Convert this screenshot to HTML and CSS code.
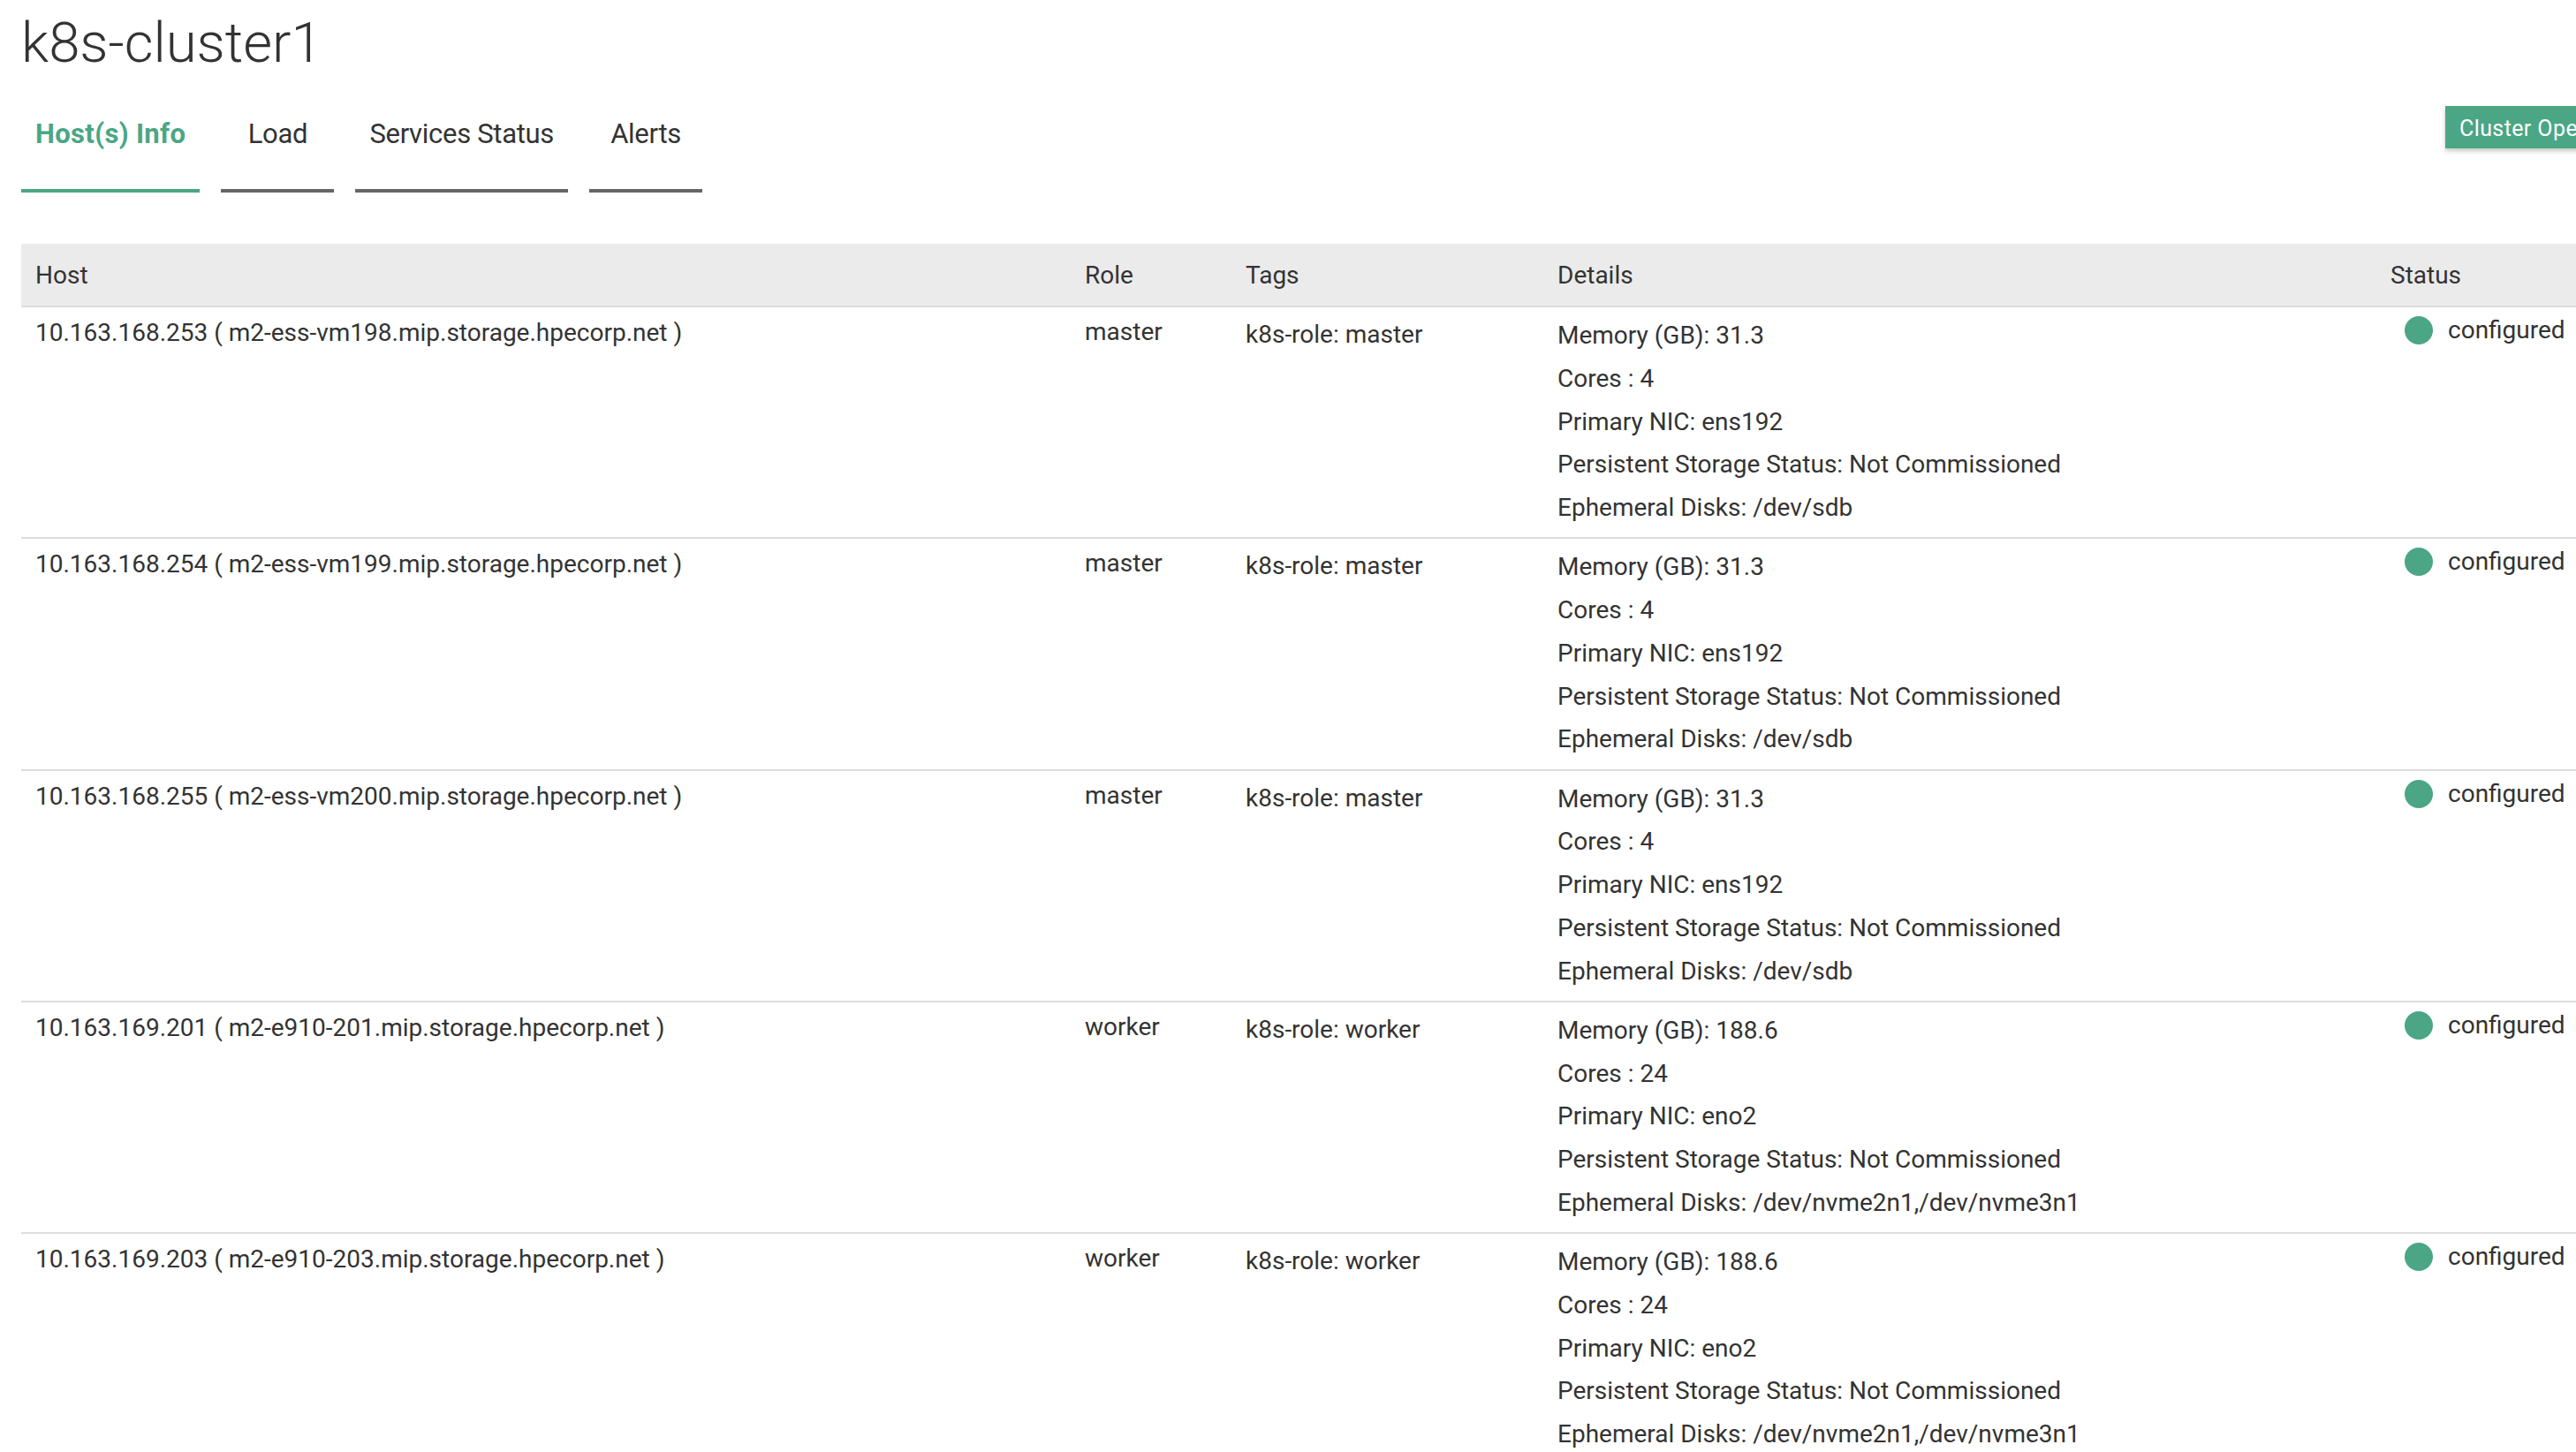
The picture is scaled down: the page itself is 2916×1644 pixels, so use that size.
FILE: index.html
```html
<!DOCTYPE html>
<html lang="en">
<head>
<meta charset="utf-8">
<title>k8s-cluster1</title>
<link rel="stylesheet" href="styles.css">
</head>
<body>
<div class="page">
  <h1 class="title">k8s-cluster1</h1>
  <div class="tabbar">
    <nav class="tabs">
      <a class="tab active">Host(s) Info</a>
      <a class="tab">Load</a>
      <a class="tab">Services Status</a>
      <a class="tab">Alerts</a>
    </nav>
    <button class="ops-btn">Cluster Operations</button>
  </div>
  <table class="hosts">
    <colgroup>
      <col class="c-host"><col class="c-role"><col class="c-tags"><col class="c-details"><col class="c-status">
    </colgroup>
    <thead>
      <tr><th>Host</th><th>Role</th><th>Tags</th><th>Details</th><th>Status</th></tr>
    </thead>
    <tbody>
      <tr>
        <td class="host">10.163.168.253 ( m2-ess-vm198.mip.storage.hpecorp.net )</td>
        <td class="role">master</td>
        <td class="tags">k8s-role: master</td>
        <td class="details"><div>Memory (GB): 31.3</div><div>Cores : 4</div><div>Primary NIC: ens192</div><div>Persistent Storage Status: Not Commissioned</div><div>Ephemeral Disks: /dev/sdb</div></td>
        <td class="status"><span class="state"><span class="dot"></span>configured</span></td>
      </tr>
      <tr>
        <td class="host">10.163.168.254 ( m2-ess-vm199.mip.storage.hpecorp.net )</td>
        <td class="role">master</td>
        <td class="tags">k8s-role: master</td>
        <td class="details"><div>Memory (GB): 31.3</div><div>Cores : 4</div><div>Primary NIC: ens192</div><div>Persistent Storage Status: Not Commissioned</div><div>Ephemeral Disks: /dev/sdb</div></td>
        <td class="status"><span class="state"><span class="dot"></span>configured</span></td>
      </tr>
      <tr>
        <td class="host">10.163.168.255 ( m2-ess-vm200.mip.storage.hpecorp.net )</td>
        <td class="role">master</td>
        <td class="tags">k8s-role: master</td>
        <td class="details"><div>Memory (GB): 31.3</div><div>Cores : 4</div><div>Primary NIC: ens192</div><div>Persistent Storage Status: Not Commissioned</div><div>Ephemeral Disks: /dev/sdb</div></td>
        <td class="status"><span class="state"><span class="dot"></span>configured</span></td>
      </tr>
      <tr>
        <td class="host">10.163.169.201 ( m2-e910-201.mip.storage.hpecorp.net )</td>
        <td class="role">worker</td>
        <td class="tags">k8s-role: worker</td>
        <td class="details"><div>Memory (GB): 188.6</div><div>Cores : 24</div><div>Primary NIC: eno2</div><div>Persistent Storage Status: Not Commissioned</div><div>Ephemeral Disks: /dev/nvme2n1,/dev/nvme3n1</div></td>
        <td class="status"><span class="state"><span class="dot"></span>configured</span></td>
      </tr>
      <tr>
        <td class="host">10.163.169.203 ( m2-e910-203.mip.storage.hpecorp.net )</td>
        <td class="role">worker</td>
        <td class="tags">k8s-role: worker</td>
        <td class="details"><div>Memory (GB): 188.6</div><div>Cores : 24</div><div>Primary NIC: eno2</div><div>Persistent Storage Status: Not Commissioned</div><div>Ephemeral Disks: /dev/nvme2n1,/dev/nvme3n1</div></td>
        <td class="status"><span class="state"><span class="dot"></span>configured</span></td>
      </tr>
    </tbody>
  </table>
</div>
</body>
</html>
```
FILE: styles.css
```css
html, body {
  margin: 0;
  padding: 0;
  background: #ffffff;
  overflow: hidden;
}
body {
  font-family: Roboto, "Liberation Sans", sans-serif;
  color: #333333;
}
.page {
  width: 2984px;
  padding: 9px 0 0 24px;
}
.title {
  margin: 0;
  font-size: 63.5px;
  line-height: 80px;
  font-weight: 300;
  color: #333333;
}
.tabbar {
  display: flex;
  align-items: flex-start;
  margin-top: 31px;
}
.tabs {
  display: flex;
  gap: 24px;
}
.tab {
  min-width: 128px;
  box-sizing: border-box;
  padding: 12px 16px 42px;
  font-size: 31px;
  line-height: 40px;
  letter-spacing: -0.3px;
  text-align: center;
  color: #333333;
  border-bottom: 4px solid #666666;
  cursor: pointer;
}
.tab.active {
  color: #4aa684;
  font-weight: 700;
  letter-spacing: 0.35px;
  border-bottom-color: #4aa684;
}
.ops-btn {
  margin-left: auto;
  flex: none;
  box-sizing: border-box;
  width: 240px;
  height: 48px;
  padding: 3px 0 0 16px;
  border: none;
  background: #4aa684;
  color: #ffffff;
  font-family: Roboto, "Liberation Sans", sans-serif;
  font-size: 25px;
  line-height: 44px;
  letter-spacing: 0.4px;
  text-align: left;
  box-shadow: 0 3px 5px rgba(0, 0, 0, 0.22);
  white-space: nowrap;
  overflow: hidden;
}
.hosts {
  margin-top: 58px;
  width: 2984px;
  table-layout: fixed;
  border-collapse: separate;
  border-spacing: 0;
  font-size: 28px;
}
.c-host { width: 1188px; }
.c-role { width: 182px; }
.c-tags { width: 353px; }
.c-details { width: 943px; }
.hosts th {
  height: 70px;
  padding: 2px 16px 0;
  background: #ebebeb;
  border-bottom: 2px solid #dcdcdc;
  text-align: left;
  font-weight: 400;
  line-height: 68px;
  box-sizing: border-box;
}
.hosts td {
  vertical-align: top;
  padding: 0 16px;
  line-height: 48.75px;
  border-bottom: 2px solid #dddddd;
  white-space: nowrap;
}
.hosts td.host { padding-top: 5px; }
.hosts td.role { padding-top: 4px; }
.hosts td.tags { padding-top: 7px; }
.hosts td.details { padding-top: 8px; padding-bottom: 8.5px; }
.hosts td.status { padding-top: 10px; padding-left: 32px; }
.state {
  display: flex;
  align-items: center;
  gap: 17px;
  line-height: 32px;
}
.dot {
  width: 32px;
  height: 32px;
  border-radius: 50%;
  background: #4aa684;
  flex: none;
}
```
